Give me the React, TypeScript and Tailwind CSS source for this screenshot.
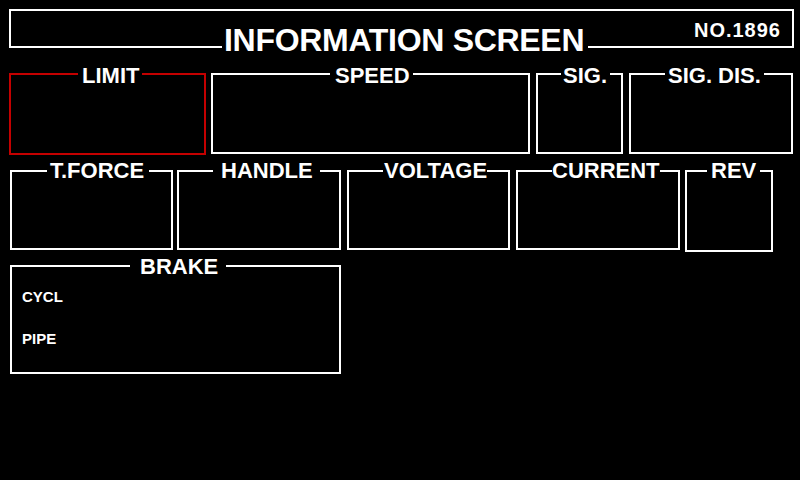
import React from "react";

type BoxProps = {
  label: string;
  className: string;
  labelClassName: string;
  children?: React.ReactNode;
};

// framed panel with its caption sitting on the top border
function Box({ label, className, labelClassName, children }: BoxProps) {
  return (
    <div className={`relative shrink-0 border-2 ${className}`}>
      <span
        className={`absolute bg-black text-[22px] leading-none font-bold whitespace-nowrap ${labelClassName}`}
      >
        {label}
      </span>
      {children}
    </div>
  );
}

export default function App() {
  return (
    <div
      className="w-[800px] h-[480px] overflow-hidden bg-black text-white pl-[9px] pt-[9px] flex flex-col"
      style={{ fontFamily: '"Liberation Sans", Arial, sans-serif' }}
    >
      {/* header */}
      <div className="relative w-[785px] h-[39px] shrink-0 border-2 border-white flex justify-end items-start pt-[9px] pr-[11px]">
        <span className="text-[20px] leading-none font-bold tracking-[1px]">NO.1896</span>
        <span className="absolute left-[211px] top-[13px] bg-black pl-[2px] pr-[4px] text-[32px] leading-none font-bold tracking-[-0.3px] whitespace-nowrap">
          INFORMATION SCREEN
        </span>
      </div>

      {/* row 1 */}
      <div className="flex items-start mt-[25px]">
        <Box
          label="LIMIT"
          className="w-[197px] h-[82px] border-[#c40000]"
          labelClassName="left-[67px] -top-[10px] pl-[4px] pr-[3px]"
        />
        <Box
          label="SPEED"
          className="ml-[5px] w-[319px] h-[81px] border-white"
          labelClassName="left-[117px] -top-[10px] pl-[5px] pr-[3px]"
        />
        <Box
          label="SIG."
          className="ml-[6px] w-[87px] h-[81px] border-white"
          labelClassName="left-[23px] -top-[10px] pl-[2px] pr-[3px]"
        />
        <Box
          label="SIG. DIS."
          className="ml-[6px] w-[164px] h-[81px] border-white"
          labelClassName="left-[34px] -top-[10px] pl-[3px] pr-[3px]"
        />
      </div>

      {/* row 2 */}
      <div className="flex items-start mt-[15px] ml-[1px] h-[82px]">
        <Box
          label="T.FORCE"
          className="w-[163px] h-[80px] border-white"
          labelClassName="left-[35px] -top-[12px] pl-[3px] pr-[5px]"
        />
        <Box
          label="HANDLE"
          className="ml-[4px] w-[164px] h-[80px] border-white"
          labelClassName="left-[34px] -top-[12px] pl-[8px] pr-[7px]"
        />
        <Box
          label="VOLTAGE"
          className="ml-[6px] w-[163px] h-[80px] border-white"
          labelClassName="left-[34px] -top-[12px] pl-[1px] pr-0"
        />
        <Box
          label="CURRENT"
          className="ml-[6px] w-[164px] h-[80px] border-white"
          labelClassName="left-[34px] -top-[12px] px-0"
        />
        <Box
          label="REV"
          className="ml-[5px] w-[88px] h-[82px] border-white"
          labelClassName="left-[20px] -top-[12px] pl-[4px] pr-[4px]"
        />
      </div>

      {/* row 3 */}
      <div className="flex items-start mt-[13px] ml-[1px]">
        <Box
          label="BRAKE"
          className="w-[331px] h-[109px] border-white"
          labelClassName="left-[118px] -top-[11px] pl-[10px] pr-[8px]"
        >
          <div className="flex flex-col gap-[27px] pl-[10px] pt-[22px] text-[15px] leading-none font-bold">
            <span>CYCL</span>
            <span>PIPE</span>
          </div>
        </Box>
      </div>
    </div>
  );
}
